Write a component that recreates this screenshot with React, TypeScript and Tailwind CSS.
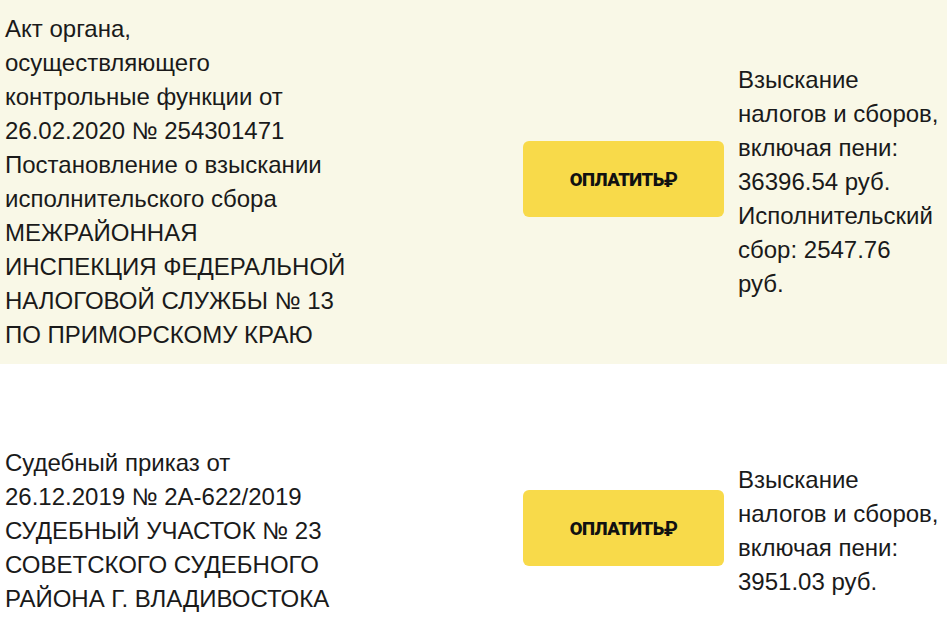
import React from "react";

type Debt = {
  title: string[];
  amount: string[];
  shaded: boolean;
};

const debts: Debt[] = [
  {
    title: [
      "Акт органа,",
      "осуществляющего",
      "контрольные функции от",
      "26.02.2020 № 254301471",
      "Постановление о взыскании",
      "исполнительского сбора",
      "МЕЖРАЙОННАЯ",
      "ИНСПЕКЦИЯ ФЕДЕРАЛЬНОЙ",
      "НАЛОГОВОЙ СЛУЖБЫ № 13",
      "ПО ПРИМОРСКОМУ КРАЮ",
    ],
    amount: [
      "Взыскание",
      "налогов и сборов,",
      "включая пени:",
      "36396.54 руб.",
      "Исполнительский",
      "сбор: 2547.76",
      "руб.",
    ],
    shaded: true,
  },
  {
    title: [
      "Судебный приказ от",
      "26.12.2019 № 2А-622/2019",
      "СУДЕБНЫЙ УЧАСТОК № 23",
      "СОВЕТСКОГО СУДЕБНОГО",
      "РАЙОНА Г. ВЛАДИВОСТОКА",
    ],
    amount: ["Взыскание", "налогов и сборов,", "включая пени:", "3951.03 руб."],
    shaded: false,
  },
];

const DebtRow: React.FC<{ debt: Debt }> = ({ debt }) => (
  <div
    className={
      "flex items-center py-3 " + (debt.shaded ? "bg-[#f9f8e7]" : "bg-white")
    }
  >
    {/* описание документа */}
    <div className="w-[350px] shrink-0 pl-[5px]">
      {debt.title.map((line) => (
        <div key={line} className="whitespace-nowrap">
          {line}
        </div>
      ))}
    </div>

    {/* кнопка оплаты */}
    <button
      type="button"
      className="ml-[173px] mb-[6px] flex h-[76px] w-[201px] shrink-0 items-center justify-center rounded-[6px] bg-[#f8da4a] pt-[2px] text-[18.5px] font-black tracking-[-0.5px] text-[#111] [font-family:Roboto,'DejaVu_Sans',sans-serif]"
    >
      ОПЛАТИТЬ
      <span className="text-[20px] font-bold leading-none">₽</span>
    </button>

    {/* сумма */}
    <div className="ml-[14px] w-[209px] shrink-0">
      {debt.amount.map((line) => (
        <div key={line} className="whitespace-nowrap">
          {line}
        </div>
      ))}
    </div>
  </div>
);

export default function App() {
  return (
    <div className="min-h-screen bg-white text-[24px] leading-[34px] text-[#1a1a1a] [font-family:'Liberation_Sans',Arial,sans-serif]">
      <DebtRow debt={debts[0]} />
      <div className="h-[70px]" />
      <DebtRow debt={debts[1]} />
    </div>
  );
}
